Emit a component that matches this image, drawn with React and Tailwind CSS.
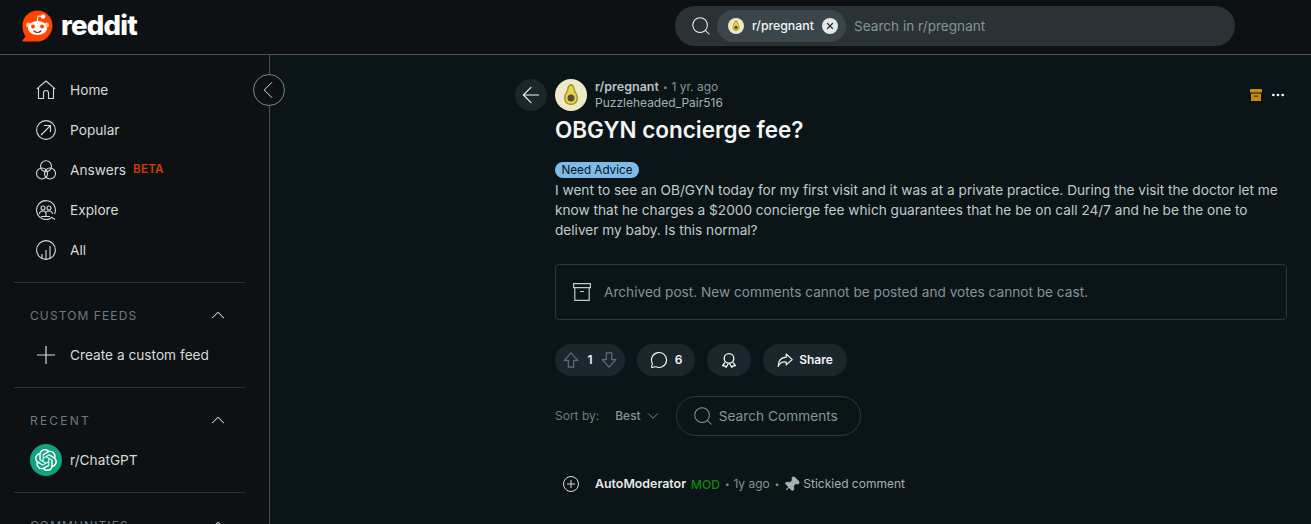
import { Search, X, ArrowLeft, ChevronUp, ChevronDown, ChevronLeft, Ellipsis, MessageCircle, Pin } from 'lucide-react';
import { SiOpenai } from 'react-icons/si';

const Snoo = () => (
  <svg width="32" height="32" viewBox="0 0 32 32">
    <path d="M16.500 0.500C24.800 0.500 31.500 7.200 31.500 15.500S24.800 31.500 16.500 31.500H2.300c-.8 0-1.200-1-.6-1.600L4.500 26.500C2.500 23.500 1.500 19.500 1.500 15.500 1.500 7.200 8.200 0.500 16.500 0.500z" fill="#ff4500" />
    <circle cx="22" cy="6.500" r="2.300" fill="#fff" />
    <path d="M22 6.500l-5 -.5 -.8 5" stroke="#fff" strokeWidth="1" fill="none" />
    <circle cx="7.500" cy="15" r="2.500" fill="#ffc2ad" />
    <circle cx="25.500" cy="15" r="2.500" fill="#ffc2ad" />
    <ellipse cx="16.500" cy="18" rx="9.500" ry="7" fill="#fff" />
    <circle cx="12" cy="16.500" r="2" fill="#ff4500" />
    <circle cx="21" cy="16.500" r="2" fill="#ff4500" />
    <path d="M13 21c2 1.800 5 1.800 7 0" stroke="#842123" strokeWidth="1.200" fill="none" strokeLinecap="round" />
  </svg>
);

const Avocado = ({ size }) => (
  <svg width={size} height={size} viewBox="0 0 32 32" className="shrink-0">
    <circle cx="16" cy="16" r="16" fill="#efe9c9" />
    <path d="M16 5c-2.500 0-3.500 2.500-4 5.500-.4 2.500-3 4.500-3 8.500 0 4.500 3 7 7 7s7-2.500 7-7c0-4-2.600-6-3-8.500C19.500 7.500 18.500 5 16 5z" fill="#a89a22" />
    <path d="M16 7c-1.600 0-2.400 2-2.800 4.500-.4 2.300-2.700 4-2.700 7.500 0 3.500 2.300 5.500 5.500 5.500s5.500-2 5.500-5.500c0-3.500-2.300-5.200-2.700-7.500C18.400 9 17.600 7 16 7z" fill="#e3d552" />
    <circle cx="16" cy="19" r="3.500" fill="#5e4a3c" />
  </svg>
);

// thin line icons for the left nav
const HomeIcon = () => (
  <svg width="20" height="20" viewBox="0 0 20 20" fill="none" stroke="#d7dadc" strokeWidth="1.100">
    <path d="M.8 8.800L10 1l9.200 7.800M2.500 8v10.500h5V13a2.500 2.500 0 015 0v5.500h5V8" />
  </svg>
);
const PopularIcon = () => (
  <svg width="20" height="20" viewBox="0 0 20 20" fill="none" stroke="#d7dadc" strokeWidth="1.100">
    <circle cx="10" cy="10" r="9.400" />
    <path d="M5 15L14.500 5.500M8 5.500h6.500V12" />
  </svg>
);
const AnswersIcon = () => (
  <svg width="20" height="20" viewBox="0 0 20 20" fill="none" stroke="#d7dadc" strokeWidth="1.100">
    <circle cx="10" cy="6.200" r="5.500" />
    <circle cx="6" cy="13.500" r="5.500" />
    <circle cx="14" cy="13.500" r="5.500" />
  </svg>
);
const ExploreIcon = () => (
  <svg width="20" height="20" viewBox="0 0 20 20" fill="none" stroke="#d7dadc" strokeWidth="1.100">
    <path d="M15 18a9.400 9.400 0 113.500-4" />
    <circle cx="7" cy="8" r="2" />
    <circle cx="13" cy="8" r="2" />
    <path d="M3.500 14c0-2 1.500-3 3.500-3s3 1 3 3v2.500M10 12c.7-.8 1.800-1 3-1 2 0 3.500 1 3.500 3M5 16.500h9M15 17l4 2.500" />
  </svg>
);
const AllIcon = () => (
  <svg width="20" height="20" viewBox="0 0 20 20" fill="none" stroke="#d7dadc" strokeWidth="1.100">
    <circle cx="10" cy="10" r="9.400" />
    <path d="M6 19v-5M10 19.400V10M14 19V6" />
  </svg>
);
const PlusIcon = () => (
  <svg width="20" height="20" viewBox="0 0 20 20" fill="none" stroke="#d7dadc" strokeWidth="1.200">
    <path d="M10 1v18M1 10h18" />
  </svg>
);
const ArchiveBox = () => (
  <svg width="18" height="18" viewBox="0 0 18 18" fill="none" stroke="#c0cbcf" strokeWidth="1.200" className="shrink-0">
    <path d="M.6.600h16.800v4H.6zM1.800 4.600v12.800h14.400V4.600M7 8.500h4" />
  </svg>
);

const ArrowUp = ({ down }) => (
  <svg width="18" height="18" viewBox="0 0 20 20" fill="none" stroke="#5f6f78" strokeWidth="1.300" className={down ? 'rotate-180' : ''}>
    <path d="M10 2L2.500 10.500H7V18h6v-7.500h4.500L10 2z" strokeLinejoin="round" />
  </svg>
);

const AwardIcon = () => (
  <svg width="16" height="16" viewBox="0 0 20 20" fill="none" stroke="#f2f4f5" strokeWidth="1.700">
    <circle cx="10" cy="8" r="6" />
    <path d="M5 13l-3 4 3 .5 1.500 1.500L9 15M15 13l3 4-3 .5-1.500 1.500L11 15" strokeLinejoin="round" />
  </svg>
);

function NavRow({ icon, children }) {
  return (
    <div className="flex items-center h-10 pl-4">
      <span className="w-10 flex justify-start items-center pl-[6px]">{icon}</span>
      {children}
    </div>
  );
}

function SectionHead({ title, tracking }) {
  return (
    <div className="flex items-center justify-between h-10 pl-4 pr-4">
      <span className={'text-[12px] mt-px text-[#6c7a82] ' + tracking}>{title}</span>
      <ChevronUp size={22} strokeWidth={1.100} className="text-[#d7dadc]" />
    </div>
  );
}

export default function App() {
  return (
    <div className="h-[524px] overflow-hidden bg-[#0b1416] flex flex-col text-[#d7dadc] relative" style={{ fontFamily: 'Inter, "Noto Sans", sans-serif' }}>
      <header className="h-[55px] shrink-0 bg-[#0e1113] border-b border-[#4a5054] flex items-center pb-[2px]">
        <div className="flex items-center pl-[21px] gap-[8px] w-[675px] shrink-0">
          <Snoo />
          <span className="text-[27.500px] font-extrabold text-white tracking-[-0.8px] leading-none">reddit</span>
        </div>
        <div className="w-[560px] h-10 rounded-full bg-[#2a3236] flex items-center pl-[15px]">
          <Search size={22} strokeWidth={1.100} className="text-[#f2f4f5]" />
          <div className="ml-[5px] h-8 w-[129px] rounded-full bg-[#3b464c] flex items-center pl-[11px]">
            <Avocado size={16} />
            <span className="ml-[8px] text-[12.300px] font-medium text-[#f2f4f5]">r/pregnant</span>
            <span className="ml-[8px] w-4 h-4 rounded-full bg-[#e2e7e9] flex items-center justify-center">
              <X size={10} strokeWidth={3} className="text-[#2a3236]" />
            </span>
          </div>
          <span className="ml-2 text-[13.600px] text-[#82959b]">Search in r/pregnant</span>
        </div>
      </header>

      <div className="flex flex-1 min-h-0">
        <aside className="w-[270px] shrink-0 bg-[#0e1113] border-r border-[#4a5054] pt-[15px] pl-[14px] pr-[24px] text-[13.700px]">
          <NavRow icon={<HomeIcon />}>Home</NavRow>
          <NavRow icon={<PopularIcon />}>Popular</NavRow>
          <NavRow icon={<AnswersIcon />}>
            Answers<span className="ml-[7px] text-[11.600px] font-semibold tracking-[0.2px] text-[#d93a00]">BETA</span>
          </NavRow>
          <NavRow icon={<ExploreIcon />}>Explore</NavRow>
          <NavRow icon={<AllIcon />}>All</NavRow>
          <div className="mt-3 border-t border-[#2a3236] pt-3">
            <SectionHead title="CUSTOM FEEDS" tracking="tracking-[1.100px]" />
            <NavRow icon={<PlusIcon />}>Create a custom feed</NavRow>
          </div>
          <div className="mt-3 border-t border-[#2a3236] pt-3">
            <SectionHead title="RECENT" tracking="tracking-[2.200px]" />
            <div className="flex items-center h-10 pl-4 gap-2">
              <span className="w-8 h-8 rounded-full bg-[#10a37f] flex items-center justify-center shrink-0">
                <SiOpenai size={22} className="text-white" />
              </span>
              r/ChatGPT
            </div>
          </div>
          <div className="mt-3 border-t border-[#2a3236] pt-3">
            <SectionHead title="COMMUNITIES" tracking="tracking-[1.100px]" />
          </div>
        </aside>

        <main className="flex-1 min-w-0 pt-6 pl-[245px] pr-6 flex gap-2 items-start">
          <button className="w-8 h-8 rounded-full bg-[#1a282d] flex items-center justify-center shrink-0">
            <ArrowLeft size={26} strokeWidth={1} className="text-[#f2f4f5]" />
          </button>
          <div className="flex-1 min-w-0">
            <div className="flex items-center h-8 gap-2">
              <Avocado size={32} />
              <div className="flex-1 text-[12px] leading-[16px] text-[#82959b]">
                <div className="flex items-center">
                  <span className="text-[12.500px] font-semibold text-[#b8c5c9]">r/pregnant</span>
                  <span className="ml-[4px] text-[8px]">•</span>
                  <span className="ml-[4px]">1 yr. ago</span>
                </div>
                <div className="text-[#a4b2b7]">Puzzleheaded_Pair516</div>
              </div>
              <svg width="12" height="12" viewBox="0 0 12 12">
                <path d="M0 0h12v3.500H0zM1 4.500h10V12H1z" fill="#c18d0b" />
                <path d="M4 6.500h4v1.500H4z" fill="#5f4505" />
              </svg>
              <Ellipsis size={16} className="text-white mr-[1px]" />
            </div>
            <h1 className="mt-[4px] text-[22.500px] leading-[30px] font-semibold text-[#f2f4f5]">OBGYN concierge fee?</h1>
            <div className="mt-[17px] h-4 w-[84px] rounded-full bg-[#7dbbe9] text-[#0b1416] text-[11.700px] leading-4 text-center">Need Advice</div>
            <p className="mt-[2px] text-[13.650px] leading-[20px] text-[#c0cbcf] max-w-[730px]">
              I went to see an OB/GYN today for my first visit and it was at a private practice. During the visit the doctor let me know that he charges a $2000 concierge fee which guarantees that he be on call 24/7 and he be the one to deliver my baby. Is this normal?
            </p>
            <div className="mt-[24px] h-[56px] rounded-[4px] border border-[#2e383c] flex items-center pl-[17px] gap-[13px] text-[13.650px] text-[#82959b]">
              <ArchiveBox />
              Archived post. New comments cannot be posted and votes cannot be cast.
            </div>
            <div className="mt-[24px] flex items-center gap-3 text-[12px] font-semibold text-[#f2f4f5]">
              <div className="h-8 w-[70px] rounded-full bg-[#1a282d] flex items-center justify-center gap-[7px]">
                <ArrowUp />1<ArrowUp down />
              </div>
              <div className="h-8 w-[58px] rounded-full bg-[#1a282d] flex items-center justify-center gap-[7px]">
                <MessageCircle size={18} strokeWidth={1.500} />6
              </div>
              <div className="h-8 w-11 rounded-full bg-[#1a282d] flex items-center justify-center">
                <AwardIcon />
              </div>
              <div className="h-8 w-[84px] rounded-full bg-[#1a282d] flex items-center justify-center gap-[6px]">
                <svg width="16" height="16" viewBox="0 0 20 20" fill="none" stroke="#f2f4f5" strokeWidth="1.500">
                  <path d="M11.500 2.500L19 9.500l-7.500 6.500v-3.500C7 12 3.500 13.500 1.500 18c0-6 3-11 10-11.500v-4z" strokeLinejoin="round" />
                </svg>
                Share
              </div>
            </div>
            <div className="mt-5 flex items-center">
              <span className="text-[12px] text-[#6c7d84]">Sort by:</span>
              <span className="ml-4 text-[12px] font-medium text-[#82959b]">Best</span>
              <ChevronDown size={18} strokeWidth={1.200} className="ml-[3px] text-[#82959b]" />
              <div className="ml-[14px] w-[185px] h-10 rounded-full border border-[#2e383c] flex items-center pl-[15px] gap-[5px] text-[13.700px] text-[#82959b]">
                <Search size={22} strokeWidth={1.100} />
                Search Comments
              </div>
            </div>
            <div className="mt-[38px] flex items-center text-[12px] text-[#82959b]">
              <span className="w-10 pl-2">
                <span className="w-4 h-4 rounded-full border border-[#d7dadc] flex items-center justify-center">
                  <svg width="8" height="8" viewBox="0 0 8 8" stroke="#d7dadc" strokeWidth="1">
                    <path d="M4 0v8M0 4h8" />
                  </svg>
                </span>
              </span>
              <span className="text-[12.400px] font-semibold text-[#e4e9eb]">AutoModerator</span>
              <span className="ml-[5px] mt-[2px] font-medium text-[#0e8a0e]">MOD</span>
              <span className="ml-[5px] text-[8px]">•</span>
              <span className="ml-[4px]">1y ago</span>
              <span className="ml-[5px] text-[8px]">•</span>
              <Pin size={17} fill="#a4b2b7" strokeWidth={1.500} className="ml-[4px] rotate-45 text-[#a4b2b7]" />
              <span className="ml-[3px] text-[#a4b2b7]">Stickied comment</span>
            </div>
          </div>
        </main>
      </div>

      <button className="absolute left-[253px] top-[74px] w-8 h-8 rounded-full bg-[#0e1113] border border-[#7c8387] flex items-center justify-center">
        <ChevronLeft size={30} strokeWidth={0.800} className="text-[#d7dadc] ml-[-2px]" />
      </button>
    </div>
  );
}
